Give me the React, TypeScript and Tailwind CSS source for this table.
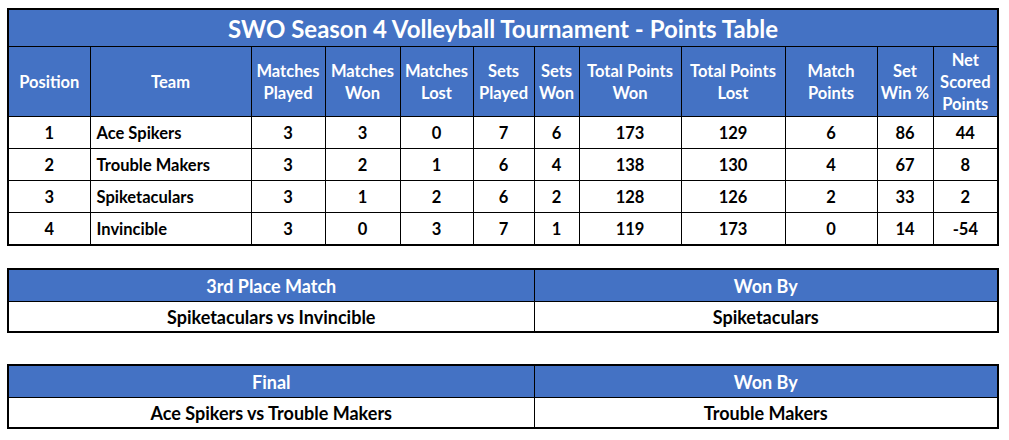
const font = { fontFamily: "Lato, 'Open Sans', sans-serif" };

const headers = [
  ["Position"],
  ["Team"],
  ["Matches", "Played"],
  ["Matches", "Won"],
  ["Matches", "Lost"],
  ["Sets", "Played"],
  ["Sets", "Won"],
  ["Total Points", "Won"],
  ["Total Points", "Lost"],
  ["Match", "Points"],
  ["Set", "Win %"],
  ["Net", "Scored", "Points"]
];

const widths = [81, 161, 74, 75, 73, 61, 45, 102, 104, 92, 56, 64];

const rows = [
  [1, "Ace Spikers", 3, 3, 0, 7, 6, 173, 129, 6, 86, 44],
  [2, "Trouble Makers", 3, 2, 1, 6, 4, 138, 130, 4, 67, 8],
  [3, "Spiketaculars", 3, 1, 2, 6, 2, 128, 126, 2, 33, 2],
  [4, "Invincible", 3, 0, 3, 7, 1, 119, 173, 0, 14, -54]
];

const matches = [
  { title: "3rd Place Match", game: "Spiketaculars vs Invincible", winner: "Spiketaculars", gap: "mt-[22px]" },
  { title: "Final", game: "Ace Spikers vs Trouble Makers", winner: "Trouble Makers", gap: "mt-[31px]" }
];

function PointsTable() {
  return (
    <div className="ml-[7px] mt-[8px] w-[992px] border-2 border-black">
      <table className="w-full table-fixed border-collapse border-hidden">
        <colgroup>
          {widths.map((w, i) => <col key={i} style={{ width: w }} />)}
        </colgroup>
        <thead>
          <tr className="h-[36px] bg-[#4472c4]">
            <th colSpan={12} className="border border-black pt-[3px] text-[24px] font-bold leading-[30px] text-white">
              SWO Season 4 Volleyball Tournament - Points Table
            </th>
          </tr>
          <tr className="h-[70px] bg-[#4472c4]">
            {headers.map((lines, i) => (
              <th key={i} className="border border-black px-0 pt-[2px] text-[16.5px] font-bold leading-[22px] text-white">
                {lines.map((l) => <div key={l} className="whitespace-nowrap">{l}</div>)}
              </th>
            ))}
          </tr>
        </thead>
        <tbody>
          {rows.map((row) => (
            <tr key={row[0]} className="h-[32px] bg-white">
              {row.map((cell, i) => (
                <td key={i} className={`border border-black pt-[2px] text-[16.5px] font-bold leading-[22px] text-black ${i === 1 ? "pl-[6px] text-left" : "text-center"}`}>
                  {cell}
                </td>
              ))}
            </tr>
          ))}
        </tbody>
      </table>
    </div>
  );
}

function MatchTable({ title, game, winner, gap }: { title: string; game: string; winner: string; gap: string }) {
  const cell = "border border-black pt-[2px] text-center text-[18px] font-bold leading-[22px]";
  return (
    <div className={`ml-[7px] w-[992px] border-2 border-black ${gap}`}>
      <table className="w-full table-fixed border-collapse border-hidden">
        <colgroup>
          <col style={{ width: 525 }} />
          <col />
        </colgroup>
        <tbody>
          <tr className="h-[31px] bg-[#4472c4] text-white">
            <td className={cell}>{title}</td>
            <td className={cell}>Won By</td>
          </tr>
          <tr className="h-[30px] bg-white text-black">
            <td className={cell}>{game}</td>
            <td className={cell}>{winner}</td>
          </tr>
        </tbody>
      </table>
    </div>
  );
}

export default function App() {
  return (
    <div className="h-[440px] w-[1009px] overflow-hidden bg-white" style={font}>
      <PointsTable />
      {matches.map((m) => <MatchTable key={m.title} {...m} />)}
    </div>
  );
}
